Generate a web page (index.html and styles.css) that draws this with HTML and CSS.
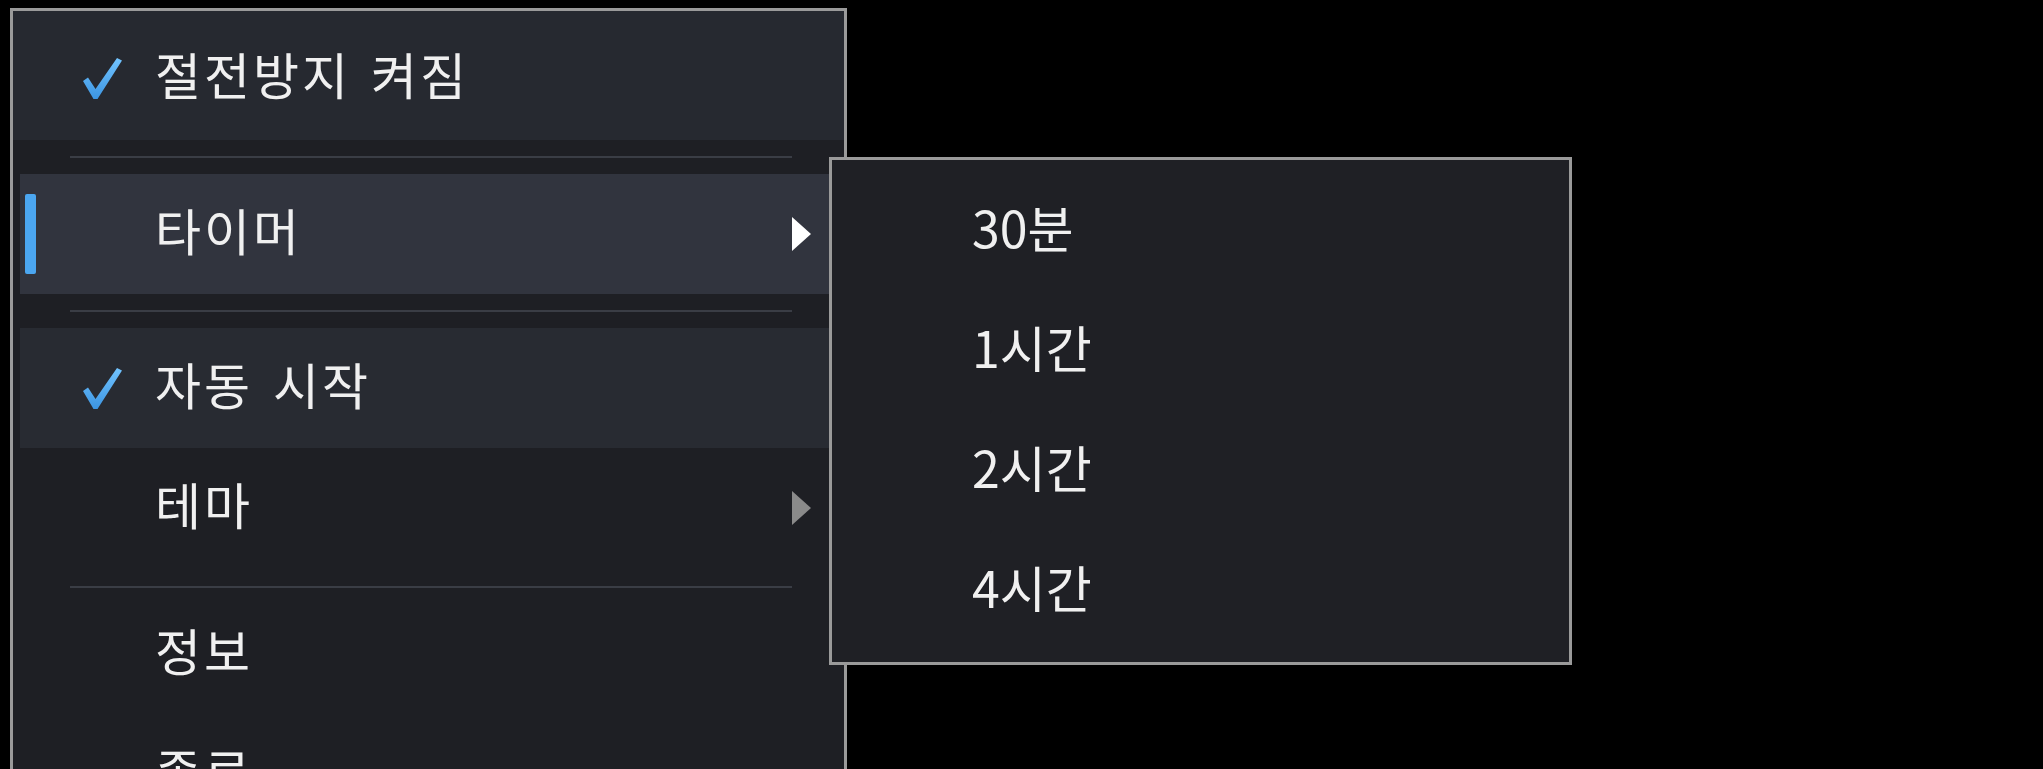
FILE: index.html
```html
<!DOCTYPE html>
<html lang="ko">
<head>
    <meta charset="UTF-8">
    <title>트레이 메뉴</title>
    <link rel="stylesheet" href="styles.css">
</head>
<body>

<ul class="menu">
    <li class="item current">
        <span class="bar"></span>
        <svg class="check" viewBox="0 0 40 42">
            <defs>
                <linearGradient id="check-fill" x1="0" y1="0" x2="0" y2="1">
                    <stop offset="0" stop-color="#72c4ff"/>
                    <stop offset="1" stop-color="#3c95e2"/>
                </linearGradient>
            </defs>
            <path d="M1 24 L6 20.5 L13.5 32 L35 1 L40 3.5 L15.5 42 L11.5 42 Z" fill="url(#check-fill)"/>
        </svg>
        <span class="label">절전방지 켜짐</span>
    </li>
    <li class="sep"></li>
    <li class="item active">
        <span class="bar"></span>
        <span class="check"></span>
        <span class="label">타이머</span>
        <span class="arrow"></span>

        <ul class="submenu">
            <li><span class="label">30분</span></li>
            <li><span class="label">1시간</span></li>
            <li><span class="label">2시간</span></li>
            <li><span class="label">4시간</span></li>
        </ul>
    </li>
    <li class="sep"></li>
    <li class="item hover">
        <span class="bar"></span>
        <svg class="check" viewBox="0 0 40 42">
            <path d="M1 24 L6 20.5 L13.5 32 L35 1 L40 3.5 L15.5 42 L11.5 42 Z" fill="url(#check-fill)"/>
        </svg>
        <span class="label">자동 시작</span>
    </li>
    <li class="item">
        <span class="bar"></span>
        <span class="check"></span>
        <span class="label">테마</span>
        <span class="arrow dim"></span>
    </li>
    <li class="sep tight"></li>
    <li class="item">
        <span class="bar"></span>
        <span class="check"></span>
        <span class="label">정보</span>
    </li>
    <li class="item">
        <span class="bar"></span>
        <span class="check"></span>
        <span class="label">종료</span>
    </li>
</ul>

</body>
</html>
```

FILE: styles.css
```css
* { margin: 0; padding: 0; box-sizing: border-box; }
html, body { height: 100%; }
body {
    background: #000;
    font-family: "Noto Sans CJK KR", "Noto Sans", sans-serif;
    color: #f0f0f0;
    padding: 8px 0 0 10px;
    overflow: hidden;
}
ul { list-style: none; }

/* main menu */
.menu {
    width: 837px;
    background: #1e1f24;
    border: 3px solid #9a9a9a;
    padding: 0 7px 40px;
}
.item {
    position: relative;
    display: flex;
    align-items: center;
    height: 120px;
    padding-left: 5px;
    font-size: 50px;
}
.item .label {
    letter-spacing: 3px;
    word-spacing: 3px;
}
.item.current {
    height: 129px;
    margin: 0 -7px;
    padding: 5px 0 0 12px;
    background: #262930;
}
.item.active { background: #31343e; }
.item.hover { background: #282b32; }

.bar {
    flex: none;
    width: 11px;
    height: 80px;
    margin-right: 46px;
    border-radius: 2px;
}
.item.active .bar { background: #4ba6f0; }

.check {
    flex: none;
    width: 40px;
    height: 42px;
    margin-right: 33px;
}
.label {
    line-height: 1;
    padding-bottom: 10px;
    white-space: nowrap;
}
.arrow {
    flex: none;
    margin-left: auto;
    margin-right: 26px;
    border-left: 19px solid #fff;
    border-top: 17px solid transparent;
    border-bottom: 17px solid transparent;
}
.arrow.dim { border-left-color: #8a8a8a; }

.sep {
    height: 2px;
    margin: 16px 45px 16px 50px;
    background: #3a3d45;
}
.sep.tight { margin-top: 18px; margin-bottom: 6px; }

/* submenu */
.submenu {
    position: absolute;
    left: 809px;
    top: -17px;
    width: 743px;
    height: 508px;
    background: #1f2025;
    border: 3px solid #9a9a9a;
    padding: 11px 0;
    z-index: 2;
}
.submenu li {
    display: flex;
    align-items: center;
    height: 120px;
    padding-left: 140px;
    font-size: 50px;
}
.submenu .label {
    letter-spacing: 0;
    word-spacing: 0;
}
```
